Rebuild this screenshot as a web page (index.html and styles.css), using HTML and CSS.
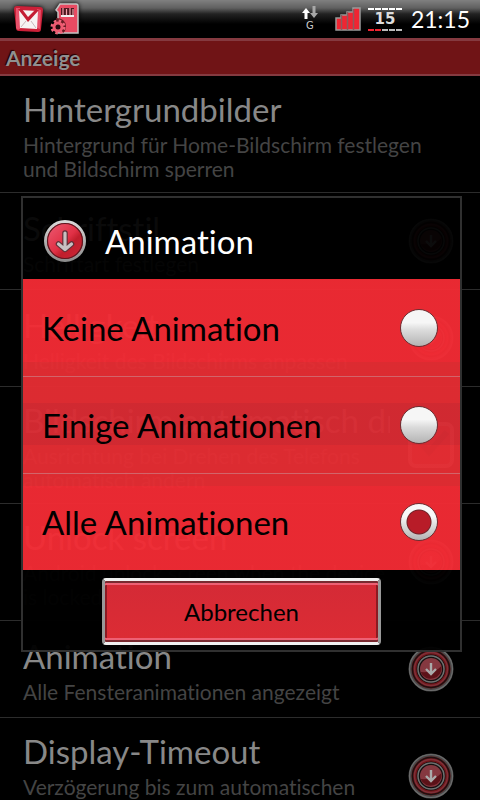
FILE: index.html
```html
<!DOCTYPE html>
<html lang="de">
<head>
<meta charset="utf-8">
<meta name="viewport" content="width=device-width, initial-scale=1">
<title>Anzeige</title>
<link rel="stylesheet" href="styles.css">
</head>
<body>
<svg class="defs" aria-hidden="true">
  <defs>
    <linearGradient id="metal" x1="0" y1="0" x2="0" y2="1"><stop offset="0" stop-color="#d8d8d8"/><stop offset="1" stop-color="#8c8c8c"/></linearGradient>
    <linearGradient id="ruby" x1="0" y1="0" x2="1" y2="1"><stop offset="0" stop-color="#ee6078"/><stop offset=".5" stop-color="#e03045"/><stop offset=".62" stop-color="#c01e2c"/><stop offset="1" stop-color="#d02838"/></linearGradient>
    <symbol id="dial" viewBox="0 0 46 46">
      <circle cx="23" cy="23" r="21" fill="#701418" stroke="#484848" stroke-width="3"/>
      <circle cx="23" cy="23" r="21.500" fill="none" stroke="#6c6c6c" stroke-width="1.200"/>
      <circle cx="23" cy="23" r="18.500" fill="none" stroke="#1c1010" stroke-width="1.500"/>
      <circle cx="23" cy="23" r="16.500" fill="none" stroke="#7d3038" stroke-width="1.500"/>
      <circle cx="23" cy="23" r="13" fill="#141010" stroke="#141010" stroke-width="3"/>
      <circle cx="23" cy="23" r="13" fill="none" stroke="#707070" stroke-width="1.500"/>
      <circle cx="23" cy="23" r="11" fill="#853840"/>
      <path d="M12.500 26a11 11 0 0 0 21-6q-6 7-21 6z" fill="#5c1218"/>
      <path d="M23 17v10.500M18 23l5 5 5-5" fill="none" stroke="#aaa" stroke-width="2.400"/>
    </symbol>
  </defs>
</svg>

<header class="status">
  <div class="notices">
    <svg width="30" height="28" viewBox="0 0 30 28" role="img" aria-label="Mail">
      <path d="M3 1 26 2q3 0 3 3l-2 19q0 3-3 3L5 26q-3 0-3-3L0 4q0-3 3-3z" fill="#cc2038"/>
      <path d="M2 3h4l1 20-3 2-2-2zM23 4l4 1-1 19-3-1z" fill="#e8506a"/>
      <path d="M5 5l19 1-1 18-17-1z" fill="#f6f3f3"/>
      <path d="M4 4l10 13L25 5h-4l-7 7-6-8z" fill="#c41e34"/>
      <path d="M7 22l5-6M22 23l-5-7" stroke="#c9b8bb" fill="none"/>
    </svg>
    <svg width="30" height="32" viewBox="0 0 30 32" role="img" aria-label="Speicherkarte">
      <path d="M10 1h16q2 0 2 2v27H8V9l-2-2z" fill="#e84a62" stroke="#c4c4c4" stroke-width="1.500"/>
      <path d="M11 5h13v8H11z" fill="#4c1820"/>
      <path d="M13 5v7M16.500 6v6M20 5v7M23 6v6" stroke="#f0a0aa" stroke-width="1.200"/>
      <path d="M11 13h13" stroke="#eee" stroke-width="2"/>
      <path d="M6 15q9 0 10 8 0 5-3 7l-6-6z" fill="#6c1c24"/>
      <circle cx="8" cy="24" r="6" fill="none" stroke="#f0667c" stroke-width="3" stroke-dasharray="2.400 2.310"/>
      <circle cx="8" cy="24" r="4" fill="#280a0e" stroke="#ee5a70" stroke-width="3"/>
    </svg>
  </div>
  <div class="gprs">
    <svg width="16" height="14" viewBox="0 0 16 14" aria-hidden="true">
      <path d="M4 2l4 5H5.500v6h-3V7H0z" fill="#fff"/><path d="M12 12l4-5h-2.500V0h-3v7H8z" fill="#a8a8a8"/>
    </svg>
    <span>G</span>
  </div>
  <svg class="signal" width="26" height="24" viewBox="0 0 26 24" role="img" aria-label="Empfang">
    <path d="M1 23V11h5V8h6V5h6V1h7v22z" fill="#ef2532" stroke="#999" stroke-width="1.500"/>
    <path d="M6.500 8v15M12.500 5v18M18.500 2v21" stroke="#8c5a5e" stroke-width="1.500"/>
  </svg>
  <div class="battery">
    <svg width="34" height="2" viewBox="0 0 34 2" aria-hidden="true"><path d="M0 1h34" stroke="#fff" stroke-width="2" stroke-dasharray="6 1"/></svg>
    <span>15</span>
    <svg width="34" height="2" viewBox="0 0 34 2" aria-hidden="true"><path d="M14 1h20" stroke="#bbb" stroke-width="2" stroke-dasharray="6 1"/><path d="M0 1h13" stroke="#ef2532" stroke-width="2" stroke-dasharray="6 1"/></svg>
  </div>
  <time class="clock">21:15</time>
</header>

<h1 class="bar">Anzeige</h1>

<main class="prefs">
  <section class="pref">
    <div class="words"><h2>Hintergrundbilder</h2><p>Hintergrund für Home-Bildschirm festlegen und Bildschirm sperren</p></div>
  </section>
  <section class="pref">
    <div class="words"><h2>Schriftstil</h2><p>Schriftart festlegen</p></div>
    <svg class="dial"><use href="#dial"/></svg>
  </section>
  <section class="pref">
    <div class="words"><h2>Helligkeit</h2><p>Helligkeit des Bildschirms anpassen</p></div>
    <svg class="dial"><use href="#dial"/></svg>
  </section>
  <section class="pref">
    <div class="words"><h2>Bildschirm automatisch drehen</h2><p>Ausrichtung bei Drehen des Telefons automatisch ändern</p></div>
    <svg class="dial" viewBox="0 0 46 46"><rect x="2" y="2" width="42" height="42" rx="6" fill="#701418" stroke="#888" stroke-width="4"/><path d="M12 20l9 10 18-20" fill="none" stroke="#000" stroke-width="6"/></svg>
  </section>
  <section class="pref">
    <div class="words"><h2>Unlock screen</h2><p>Android unlock screen when the device is locked</p></div>
    <svg class="dial"><use href="#dial"/></svg>
  </section>
  <section class="pref">
    <div class="words"><h2>Animation</h2><p>Alle Fensteranimationen angezeigt</p></div>
    <svg class="dial"><use href="#dial"/></svg>
  </section>
  <section class="pref">
    <div class="words"><h2>Display-Timeout</h2><p>Verzögerung bis zum automatischen Ausschalten des Displays</p></div>
    <svg class="dial"><use href="#dial"/></svg>
  </section>
</main>

<form class="dialog" role="dialog" aria-labelledby="dialog-title">
  <div class="dialog-head">
    <svg width="44" height="44" viewBox="0 0 44 44" aria-hidden="true">
      <circle cx="22" cy="22" r="19.500" fill="url(#ruby)" stroke="url(#metal)" stroke-width="3"/>
      <circle cx="22" cy="22" r="17.500" fill="none" stroke="#5c1820" stroke-width="1.200"/>
      <path d="M22 14v14M15.500 25l6.500 5.500 6.500-5.500" fill="none" stroke="#5c3038" stroke-width="5.500" stroke-linecap="round" stroke-linejoin="round"/>
      <path d="M22 14v14M15.500 25l6.500 5.500 6.500-5.500" fill="none" stroke="#c8c0c2" stroke-width="3.200" stroke-linecap="round" stroke-linejoin="round"/>
    </svg>
    <h2 id="dialog-title">Animation</h2>
  </div>
  <div class="choices">
    <label class="choice"><span>Keine Animation</span><input type="radio" name="animation" value="none"></label>
    <label class="choice"><span>Einige Animationen</span><input type="radio" name="animation" value="some"></label>
    <label class="choice"><span>Alle Animationen</span><input type="radio" name="animation" value="all" checked></label>
  </div>
  <div class="dialog-foot"><button type="button">Abbrechen</button></div>
</form>
</body>
</html>
```
FILE: styles.css
```css
* { box-sizing: border-box; }

body {
  position: relative;
  height: 100vh;
  margin: 0;
  overflow: hidden;
  background: #000;
  color: #888;
  font-family: Lato, "Liberation Sans", sans-serif;
  font-variant-ligatures: none;
}

h1, h2, p { margin: 0; font-weight: 400; }

.defs { position: absolute; width: 0; height: 0; }

.status {
  display: flex;
  align-items: center;
  height: 38px;
  padding: 0 10px 0 14px;
  background: linear-gradient(#808080, #606060 8px, #222 14px, #000 24px);
  color: #fff;
}

.notices { display: flex; align-items: center; gap: 6px; margin-right: auto; }
.notices svg { filter: drop-shadow(0 0 2px #000); }

.gprs { display: flex; flex-direction: column; align-items: center; width: 16px; margin-right: 17px; }
.gprs span { font: 10px/12px "DejaVu Sans", sans-serif; color: #ccc; }

.signal { margin-right: 7px; }

.battery { display: flex; flex-direction: column; align-items: center; gap: 2px; margin-right: 9px; }
.battery span { font: bold 15px/15px "DejaVu Sans", sans-serif; color: #ddd; }

.clock { font-size: 23px; line-height: 36px; }

.bar {
  height: 38px;
  padding: 0 6px;
  border-top: 3px solid #853a40;
  border-bottom: 2px solid #853a40;
  background: #701416;
  color: #909090;
  font-size: 21px;
  font-weight: 700;
  line-height: 34px;
  text-shadow: -1px -1px 1px #200;
}

.pref {
  display: flex;
  align-items: center;
  justify-content: space-between;
  min-height: 97px;
  padding: 10px 26px 11px 23px;
  border-bottom: 1px solid #2c2c2c;
}

.words { flex: 1; min-width: 0; }
.words:not(:last-child) { padding-right: 18px; }
.pref h2 { overflow: hidden; font-size: 33px; line-height: 47px; white-space: nowrap; }
.pref p { color: #444; font-size: 21px; line-height: 24px; }
.dial { flex: none; width: 46px; height: 46px; }

.dialog {
  position: absolute;
  top: 196px;
  right: 18px;
  left: 21px;
  border: 2px solid #303030;
}

.dialog-head {
  display: flex;
  align-items: center;
  gap: 18px;
  height: 81px;
  padding: 4px 20px 0;
  background: rgba(0, 0, 0, .93);
  color: #fff;
}
.dialog-head h2 { font-size: 33px; line-height: 40px; }

.choices {
  background: linear-gradient(
    rgba(242, 43, 52, .96) 83px,
    rgba(229, 45, 51, .96) 83px 124px,
    rgba(217, 43, 51, .96) 124px 166px,
    rgba(229, 45, 51, .96) 166px 207px,
    rgba(242, 43, 52, .96) 207px);
}

.choice {
  display: flex;
  align-items: center;
  justify-content: space-between;
  height: 97px;
  padding: 0 22px 0 19px;
  color: #000;
  font-size: 33px;
  line-height: 40px;
}
.choice + .choice { border-top: 1px solid #d2646a; }

.choice input {
  width: 38px;
  height: 38px;
  margin: 0;
  appearance: none;
  border: 1px solid #6c3034;
  border-radius: 50%;
  background: linear-gradient(#f6f6f6 35%, #dcdcdc 55%, #b4b4b4);
}
.choice input:checked {
  background:
    radial-gradient(circle, #b81c28 11px, #70242a 12px, transparent 13px),
    linear-gradient(#f8f8f8 35%, #dcdcdc 60%, #b4b4b4);
}

.dialog-foot {
  display: flex;
  justify-content: center;
  padding: 8px 4px 5px;
  background: rgba(0, 0, 0, .96);
}
.dialog-foot button {
  width: 65%;
  height: 67px;
  border: 3px solid;
  border-color: #f0f0f0 #999 #f0f0f0 #999;
  border-radius: 4px;
  background: linear-gradient(#d42a36, #dc2c34);
  box-shadow: inset 0 2px 0 #7a2a30, inset 0 4px 0 #ee6074, inset 0 -2px 0 #7a2a30, inset 0 -4px 0 #ee6074, inset 2px 0 0 #8c1a22, inset -2px 0 0 #8c1a22;
  color: #000;
  font: 24px/30px Lato, "Liberation Sans", sans-serif;
}
```
